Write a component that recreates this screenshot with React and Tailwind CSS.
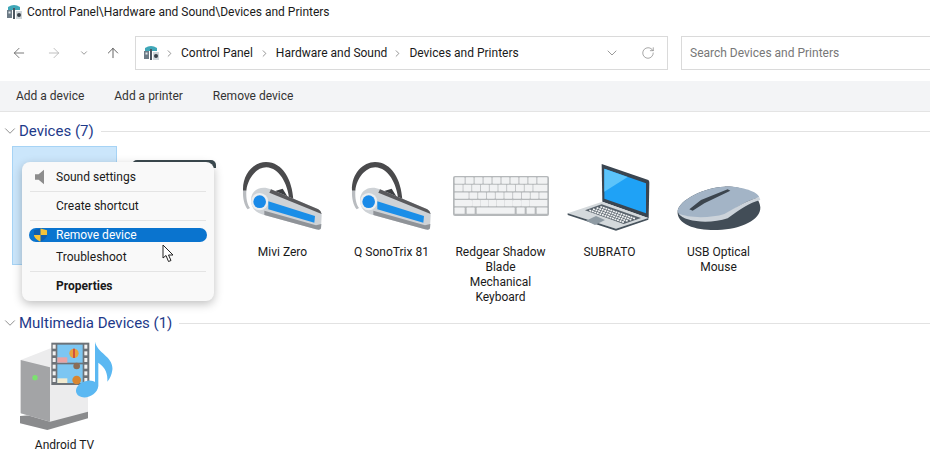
import React from "react";
import { ArrowLeft, ArrowRight, ArrowUp, ChevronDown, ChevronRight, RotateCw } from "lucide-react";

// small control panel glyph used in title bar and address bar
const PanelIcon = ({ className }) => (
  <svg viewBox="0 0 16 16" className={className}>
    <path d="M2 3 Q8 -1 14 3 L14 6 L2 6 Z" fill="#3fa7b8" />
    <rect x="1" y="6" width="5" height="8" fill="#6d7b86" />
    <rect x="2.5" y="7.5" width="2" height="2" fill="#dfe6ea" />
    <rect x="7" y="4" width="2" height="11" fill="#4c5660" />
    <rect x="10" y="7" width="6" height="8" fill="#cfd6da" />
    <circle cx="13" cy="11" r="2" fill="#39424a" />
  </svg>
);

const Headset = () => (
  <svg viewBox="12 30 288 252" className="w-[96px] h-[84px]">
    <path d="M36 122 C34 70 70 36 105 36 C155 36 184 90 187 150 L175 150 C170 100 145 54 106 52 C76 52 50 85 46 122 Z" fill="#4a4a4c" />
    <path d="M36 122 L46 122 C45 145 48 162 57 174 L50 178 C40 165 35 145 36 122 Z" fill="#b9bcc0" />
    <path d="M125 125 L155 116 L176 150 L150 160 Z" fill="#3d3f42" />
    <path d="M60 150 C60 120 90 105 120 118 L262 178 Q272 184 272 196 L270 235 Q268 242 255 238 L100 195 C75 190 60 175 60 150 Z" fill="#ced2d6" />
    <path d="M120 118 L262 178 Q272 184 272 192 L115 128 Z" fill="#59595c" />
    <path d="M100 195 L255 238 Q268 242 270 235 L271 222 L255 226 L100 182 Z" fill="#8f9398" />
    <circle cx="86" cy="155" r="26" fill="#eceef0" />
    <circle cx="86" cy="155" r="19" fill="#1a8ae8" />
    <path d="M112 154 L252 198 L250 218 L112 178 Z" fill="#1a8ee8" />
  </svg>
);

const keyRows = [
  [30, 24, 24, 24, 24, 24, 24, 24, 24, 30],
  [24, 24, 24, 24, 24, 24, 24, 24, 24, 42],
  [42, 24, 24, 24, 24, 24, 24, 24, 24, 24],
  [52, 24, 24, 24, 24, 24, 24, 24, 54],
  [30, 24, 114, 24, 24, 32],
];

const Keyboard = () => (
  <svg viewBox="36 30 288 252" className="w-[96px] h-[84px]">
    <rect x="36" y="78" width="288" height="120" rx="6" fill="#b5b8ba" />
    {keyRows.map((row, r) => {
      let x = 41;
      return row.map((w, i) => {
        const gap = (278 - row.reduce((a, b) => a + b, 0)) / (row.length - 1);
        const el = <rect key={r + "-" + i} x={x} y={82 + r * 22.6} width={w} height="19" rx="2" fill="#f1f2f3" />;
        x += w + gap;
        return el;
      });
    })}
  </svg>
);

const Laptop = () => (
  <svg viewBox="363 30 288 252" className="w-[96px] h-[84px]">
    <path d="M482 42 L622 90 Q625 92 625 98 L623 205 L484 155 Z" fill="#3a4550" />
    <path d="M490 56 L615 100 L615 190 L490 146 Z" fill="#1fa2f6" />
    <path d="M490 56 L560 81 L490 125 Z" fill="#5cc4fa" />
    <path d="M380 190 L484 155 L622 204 L525 236 Z" fill="#d4d9dc" />
    <path d="M380 190 L525 236 L622 204 L622 209 L525 242 L380 195 Z" fill="#46525c" />
    <path d="M432 181 L482 163 L600 204 L548 222 Z" fill="#59636c" />
    {[0, 1, 2, 3].map((i) => (
      <path
        key={i}
        d={`M${478 - i * 11} ${170 + i * 3.6} L${582 - i * 11} ${206 + i * 3.6}`}
        fill="none"
        stroke="#f2f4f5"
        strokeWidth="5"
        strokeDasharray="6 2"
      />
    ))}
    <path d="M435 212 L465 198 L492 210 L462 225 Z" fill="#8e9aa3" />
  </svg>
);

const Mouse = () => (
  <svg viewBox="690 30 288 252" className="w-[96px] h-[84px]">
    <path d="M710 182 C715 150 790 112 850 110 C900 108 955 130 958 172 C960 210 900 238 830 240 C770 242 705 225 710 182 Z" fill="#424d57" />
    <path d="M710 182 C715 150 790 112 850 110 C900 108 950 125 955 142 C920 150 890 170 850 198 C800 215 710 210 710 182 Z" fill="#a3b4c6" />
    <path d="M712 190 C740 205 810 205 850 192 C890 170 925 148 955 142 L958 150 C925 158 895 180 860 205 C810 222 730 218 712 190 Z" fill="#ccd3da" />
    <path d="M745 178 L780 150 L860 118 L868 122 L790 160 L755 182 Z" fill="#3c454e" />
  </svg>
);

const MediaBox = () => (
  <svg viewBox="49 90 288 291" className="w-[96px] h-[97px]">
    <path d="M58 318 L262 302 L262 325 L140 360 L58 340 Z" fill="#8a8b8d" />
    <path d="M60 150 L150 115 L262 170 L262 305 L148 335 L60 310 Z" fill="#ececed" />
    <path d="M60 150 L148 172 L148 335 L60 310 Z" fill="#a3a4a6" />
    <circle cx="103" cy="203" r="8" fill="#7be26f" />
    <rect x="152" y="98" width="114" height="127" fill="#6d7278" />
    <rect x="170" y="104" width="76" height="54" fill="#7cc6f2" />
    <rect x="170" y="163" width="76" height="56" fill="#7cc6f2" />
    <rect x="170" y="142" width="30" height="16" fill="#e9a3a3" />
    <rect x="170" y="205" width="30" height="14" fill="#f1ead0" />
    <circle cx="220" cy="130" r="14" fill="#e8a33c" />
    <rect x="217" y="116" width="6" height="28" fill="#d2503c" />
    <circle cx="228" cy="168" r="10" fill="#8a6d58" />
    <circle cx="228" cy="210" r="13" fill="#d9862f" />
    {[0, 1, 2, 3, 4, 5].map((i) => (
      <g key={i}>
        <rect x="156" y={104 + i * 20} width="9" height="12" fill="#f1f1f1" />
        <rect x="251" y={104 + i * 20} width="9" height="12" fill="#f1f1f1" />
      </g>
    ))}
    <path d="M283 95 C290 130 340 140 335 180 C333 195 328 205 320 215 C322 185 310 170 293 158 L293 228 C290 255 255 270 235 258 C215 245 230 215 262 212 C272 211 280 214 283 216 Z" fill="#5bb8f2" />
  </svg>
);

const devices = [
  { name: "Mivi Zero", icon: <Headset /> },
  { name: "Q SonoTrix 81", icon: <Headset /> },
  { name: "Redgear Shadow Blade Mechanical Keyboard", icon: <Keyboard /> },
  { name: "SUBRATO", icon: <Laptop /> },
  { name: "USB Optical Mouse", icon: <Mouse /> },
];

const SectionHeader = ({ title }) => (
  <div className="flex items-center h-[20px] pl-[1px]">
    <ChevronDown size={18} strokeWidth={1} className="text-[#6b6b6b]" />
    <span className="text-[15px] text-[#1e3a8a] whitespace-nowrap">{title}</span>
    <div className="flex-1 ml-[7px] h-px bg-[#e2e2e2]" />
  </div>
);

const Tile = ({ name, children }) => (
  <div className="w-[109px] flex flex-col items-center">
    {children}
    <div className="w-[91px] mt-[1px] text-center text-[12px] leading-[15px] text-[#1a1a1a]">{name}</div>
  </div>
);

const MenuItem = ({ icon, bold, children }) => (
  <div className={`flex items-center h-[14px] pl-[27px] text-[12px] text-[#1a1a1a] relative ${bold ? "font-bold" : ""}`}>
    {icon}
    {children}
  </div>
);

const Separator = () => <div className="h-px bg-[#e4e4e4] my-[7px] mx-[1px]" />;

export default function App() {
  return (
    <div
      className="relative w-[930px] h-[455px] overflow-hidden bg-white text-[12px] text-[#1a1a1a]"
      style={{ fontFamily: 'Roboto, "Open Sans", sans-serif' }}
    >
      {/* title bar */}
      <div className="flex items-center h-[23px] pl-[6px]">
        <PanelIcon className="w-[16px] h-[16px]" />
        <span className="ml-[5px] whitespace-nowrap">Control Panel\Hardware and Sound\Devices and Printers</span>
      </div>

      {/* nav row */}
      <div className="flex items-center h-[34px] mt-[13px]">
        <div className="flex items-center w-[135px] shrink-0 relative">
          <ArrowLeft size={16} strokeWidth={1.3} className="ml-[11px] text-[#666]" />
          <ArrowRight size={16} strokeWidth={1.3} className="ml-[19px] text-[#b5b5b5]" />
          <ChevronDown size={10} strokeWidth={1.6} className="ml-[17px] text-[#666]" />
          <ArrowUp size={16} strokeWidth={1.3} className="ml-[16px] text-[#4d4d4d]" />
        </div>
        <div className="flex items-center w-[533px] h-[34px] border border-[#dadada] pl-[7px] shrink-0">
          <PanelIcon className="w-[16px] h-[16px]" />
          <ChevronRight size={11} strokeWidth={1.5} className="ml-[5px] text-[#666]" />
          <span className="ml-[6px] whitespace-nowrap">Control Panel</span>
          <ChevronRight size={11} strokeWidth={1.5} className="ml-[6px] text-[#666]" />
          <span className="ml-[6px] whitespace-nowrap">Hardware and Sound</span>
          <ChevronRight size={11} strokeWidth={1.5} className="ml-[5px] text-[#666]" />
          <span className="ml-[6px] whitespace-nowrap">Devices and Printers</span>
          <div className="flex-1" />
          <ChevronDown size={16} strokeWidth={1} className="text-[#666]" />
          <RotateCw size={14} strokeWidth={1.1} className="ml-[21px] mr-[12px] text-[#777]" />
        </div>
        <div className="flex items-center w-[270px] h-[34px] ml-[13px] border border-[#dadada] pl-[8px] shrink-0 text-[#777]">
          Search Devices and Printers
        </div>
      </div>

      {/* command bar */}
      <div className="flex items-center h-[31px] mt-[11px] bg-[#f3f4f6] border-b border-[#e4e4e4] pl-[16px] gap-[30px] text-[#333]">
        <span>Add a device</span>
        <span>Add a printer</span>
        <span>Remove device</span>
      </div>

      <div className="mt-[9px]">
        <SectionHeader title="Devices (7)" />
        <div className="flex pl-[10px] pt-[5px] h-[172px]">
          <div className="w-[109px] px-[2px]">
            <div className="h-[119px] bg-[#cbe6fb] border border-[#a6d3f5]" />
          </div>
          <div className="w-[109px] flex justify-center pt-[14px]">
            <div className="w-[84px] h-[8px] bg-[#3c4a50] rounded-t-[5px]" />
          </div>
          {devices.map((d) => (
            <div key={d.name} className="pt-[14px]">
              <Tile name={d.name}>{d.icon}</Tile>
            </div>
          ))}
        </div>

        <SectionHeader title="Multimedia Devices (1)" />
        <div className="flex pl-[10px] pt-[7px]">
          <Tile name="Android TV">
            <MediaBox />
          </Tile>
        </div>
      </div>

      {/* context menu */}
      <div className="absolute left-[22px] top-[162px] w-[192px] h-[139px] bg-[#f9f9f9] rounded-[8px] shadow-[0_3px_10px_rgba(0,0,0,0.25)] px-[7px] pt-[8px]">
        <MenuItem
          icon={
            <svg viewBox="0 0 10 16" className="absolute left-[6px] top-[-1px] w-[9px] h-[16px]">
              <path d="M0 5 L4 5 L10 0 L10 16 L4 11 L0 11 Z" fill="#8d8d8d" />
            </svg>
          }
        >
          Sound settings
        </MenuItem>
        <Separator />
        <MenuItem>Create shortcut</MenuItem>
        <Separator />
        <div className="flex items-center h-[14px] pl-[27px] bg-[#0a74cf] rounded-full text-[12px] text-white relative">
          <svg viewBox="0 0 16 14" className="absolute left-[4px] top-0 w-[15px] h-[14px]">
            <path d="M1 2 L8 0 L15 2 L15 7 C15 10 11 13 8 14 C5 13 1 10 1 7 Z" fill="#0f5fb0" />
            <path d="M8 0 L15 2 L15 7 L8 7 Z M8 7 L1 7 C1 10 5 13 8 14 Z" fill="#f4c33a" />
          </svg>
          Remove device
        </div>
        <div className="mt-[8px]">
          <MenuItem>Troubleshoot</MenuItem>
        </div>
        <Separator />
        <MenuItem bold>Properties</MenuItem>
      </div>

      {/* mouse pointer */}
      <svg viewBox="0 0 13 19" className="absolute left-[162px] top-[244px] w-[13px] h-[19px]">
        <path d="M1 1 L1 14 L4 11.5 L6.5 17.5 L9 16.5 L6.5 11 L11 11 Z" fill="#fff" stroke="#222" strokeWidth="1" />
      </svg>
    </div>
  );
}
